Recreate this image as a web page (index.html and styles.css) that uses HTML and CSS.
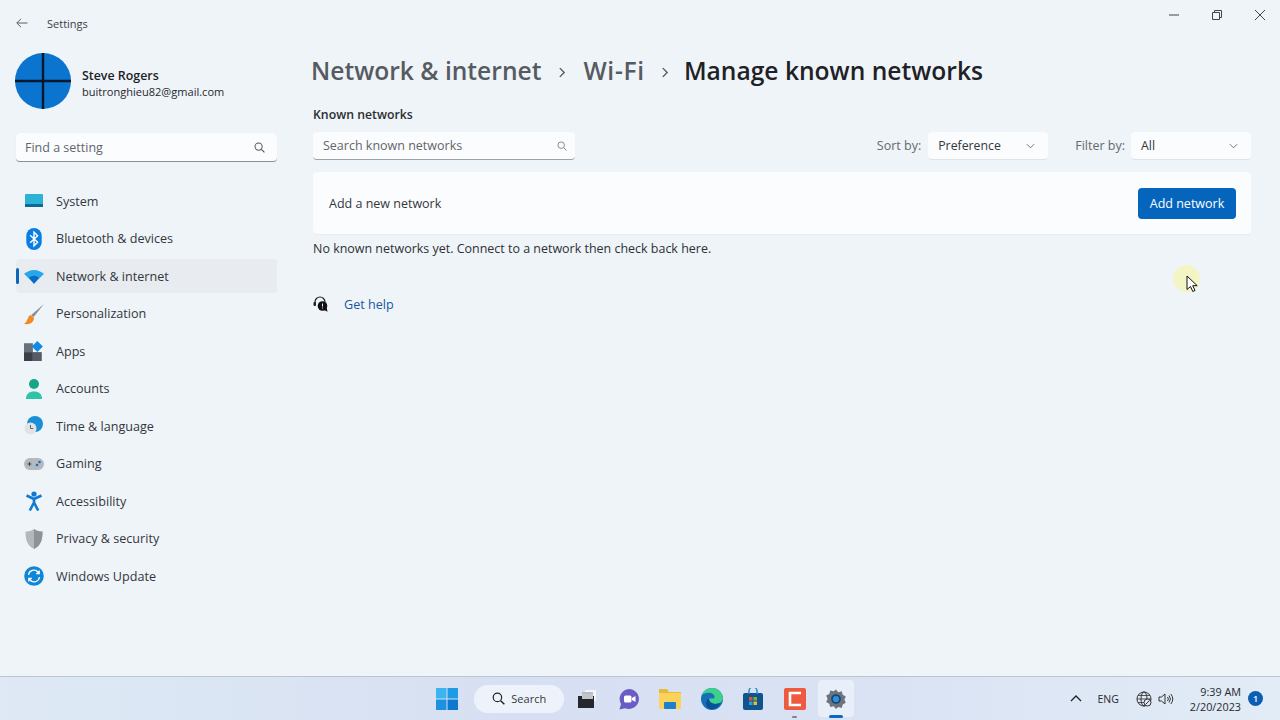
FILE: index.html
```html
<!DOCTYPE html>
<html lang="en">
<head>
<meta charset="utf-8">
<title>Settings</title>
<link rel="stylesheet" href="styles.css">
</head>
<body>
<div class="app">
  <header class="titlebar">
    <svg class="back" viewBox="0 0 12 10"><path d="M11.500 5H.8M5 .8.8 5 5 9.200" fill="none" stroke="#5a5f66" stroke-width="1"/></svg>
    <span class="apptitle">Settings</span>
    <div class="winbtns">
      <svg class="winbtn" viewBox="0 0 10 10"><path d="M0 5h10" stroke="#444" fill="none"/></svg>
      <svg class="winbtn" viewBox="0 0 10 10"><path d="M.5 2.500h7v7h-7zM2.500 2.500V.5h7v7h-2" stroke="#444" fill="none"/></svg>
      <svg class="winbtn" viewBox="0 0 10 10"><path d="M0 0l10 10M10 0 0 10" stroke="#444" fill="none"/></svg>
    </div>
  </header>
  <div class="main">
    <aside class="sidebar">
      <div class="profile">
        <svg class="avatar" viewBox="0 0 56 56"><circle cx="28" cy="28" r="28" fill="#0a74cf"/><path d="M28 0v56M0 28h56" stroke="#07182c" stroke-width="2.400"/></svg>
        <div class="who">
          <div class="name">Steve Rogers</div>
          <div class="mail">buitronghieu82@gmail.com</div>
        </div>
      </div>
      <div class="findbox">
        <span class="placeholder">Find a setting</span>
        <svg class="searchicon" viewBox="0 0 12 12"><circle cx="5" cy="5" r="3.900" fill="none" stroke="#555" stroke-width="1.100"/><path d="M8 8l3.400 3.400" stroke="#555" stroke-width="1.200"/></svg>
      </div>
      <nav class="nav">
        <div class="navrow">
          <svg class="navicon" viewBox="0 0 20 20"><rect x="1" y="3" width="18" height="13" rx="1" fill="#2bb3d6"/><rect x="1" y="13" width="18" height="3" fill="#0c6a9a"/></svg>
          <span>System</span>
        </div>
        <div class="navrow">
          <svg class="navicon big" viewBox="0 0 18 20"><rect x="2" y="0" width="14" height="20" rx="7" fill="#0a7de3"/><path d="M5.500 6.500 12.300 13 9 16.200V3.800L12.300 7 5.500 13.500" fill="none" stroke="#fff" stroke-width="1.300"/></svg>
          <span>Bluetooth &amp; devices</span>
        </div>
        <div class="navrow active">
          <svg class="navicon" viewBox="0 0 18 16"><path d="M0 6Q9-1 18 6L9 15z" fill="#27a7e8"/><path d="M4.500 9.500Q9 6 13.500 9.500L9 15z" fill="#0a68c9"/></svg>
          <span>Network &amp; internet</span>
        </div>
        <div class="navrow">
          <svg class="navicon big" viewBox="0 0 18 18"><path d="M18 0 6.500 10l2 2z" fill="#8a8f96"/><path d="M6 10C3 10.500 4 15.500 0 18c4 .5 8.500-.5 9-5.500z" fill="#f08a24"/></svg>
          <span>Personalization</span>
        </div>
        <div class="navrow">
          <svg class="navicon" viewBox="0 0 18 18"><rect x="0" y="2" width="8" height="8" fill="#68707a"/><rect x="0" y="10" width="8" height="8" fill="#3a4048"/><rect x="8" y="10" width="8" height="8" fill="#565c65"/><path d="M12 0l5 5-5 5-5-5z" fill="#1189e6"/></svg>
          <span>Apps</span>
        </div>
        <div class="navrow">
          <svg class="navicon" viewBox="0 0 18 20"><circle cx="9" cy="5" r="5" fill="#17a589"/><path d="M1 20c0-5 3-7.500 8-7.500s8 2.500 8 7.500z" fill="#2ec4a6"/></svg>
          <span>Accounts</span>
        </div>
        <div class="navrow">
          <svg class="navicon" viewBox="0 0 20 20"><circle cx="11" cy="8" r="8" fill="#1a8fd6"/><circle cx="6.500" cy="12.500" r="6" fill="#dfe3e8"/><path d="M6.500 9v3.500h2.800" fill="none" stroke="#555" stroke-width=".9"/></svg>
          <span>Time &amp; language</span>
        </div>
        <div class="navrow">
          <svg class="navicon" viewBox="0 0 20 14"><rect y="1" width="20" height="12" rx="6" fill="#b4b8bf"/><path d="M3.500 7h4M5.500 5v4" stroke="#444" stroke-width="1"/><circle cx="13" cy="8" r="1.300" fill="#1a6fc4"/><circle cx="15.500" cy="5" r="1.300" fill="#1a6fc4"/></svg>
          <span>Gaming</span>
        </div>
        <div class="navrow">
          <svg class="navicon" viewBox="0 0 18 20"><circle cx="9" cy="3" r="2.600" fill="#0f7ad1"/><path d="M1.500 4.500 9 8l7.500-3.500M9 8v3.500M9 11.500 4.800 19.500M9 11.500l4.200 8" fill="none" stroke="#0f7ad1" stroke-width="2.600"/></svg>
          <span>Accessibility</span>
        </div>
        <div class="navrow">
          <svg class="navicon" viewBox="0 0 18 20"><path d="M9 0c2.500 2 5.500 2.500 8.500 2.500 0 8-1.500 14-8.500 17.500C2 16.500.5 10.500.5 2.500 3.500 2.500 6.500 2 9 0z" fill="#b4b8bd"/><path d="M9 0c2.500 2 5.500 2.500 8.500 2.500 0 8-1.500 14-8.500 17.500z" fill="#8e9399"/></svg>
          <span>Privacy &amp; security</span>
        </div>
        <div class="navrow">
          <svg class="navicon" viewBox="0 0 20 20"><circle cx="10" cy="10" r="9.800" fill="#0f86d8"/><path d="M4.500 9a5.500 5.500 0 0 1 9.500-3l1.200 1.500M15.200 4.500v3h-3M15.500 11a5.500 5.500 0 0 1-9.500 3l-1.200-1.500M4.800 15.500v-3h3" fill="none" stroke="#fff" stroke-width="1.300"/></svg>
          <span>Windows Update</span>
        </div>
      </nav>
    </aside>
    <main class="content">
      <h1 class="crumbs">
        <span class="crumb">Network &amp; internet</span>
        <svg class="sep" viewBox="0 0 6 10"><path d="M1 1l4 4-4 4" fill="none" stroke="#555" stroke-width="1.200"/></svg>
        <span class="crumb wifi">Wi-Fi</span>
        <svg class="sep" viewBox="0 0 6 10"><path d="M1 1l4 4-4 4" fill="none" stroke="#555" stroke-width="1.200"/></svg>
        <span class="current">Manage known networks</span>
      </h1>
      <div class="sectionlabel">Known networks</div>
      <div class="toolbar">
        <div class="knownsearch">
          <span class="placeholder">Search known networks</span>
          <svg class="searchicon small" viewBox="0 0 12 12"><circle cx="5" cy="5" r="3.900" fill="none" stroke="#777" stroke-width="1"/><path d="M8 8l3.400 3.400" stroke="#777" stroke-width="1.100"/></svg>
        </div>
        <div class="filters">
          <span class="fieldlabel">Sort by:</span>
          <div class="select"><span>Preference</span><svg class="chev" viewBox="0 0 10 6"><path d="M1 1l4 4 4-4" fill="none" stroke="#666"/></svg></div>
          <span class="fieldlabel second">Filter by:</span>
          <div class="select"><span>All</span><svg class="chev" viewBox="0 0 10 6"><path d="M1 1l4 4 4-4" fill="none" stroke="#666"/></svg></div>
        </div>
      </div>
      <section class="card">
        <span>Add a new network</span>
        <button class="primary">Add network</button>
      </section>
      <p class="empty">No known networks yet. Connect to a network then check back here.</p>
      <div class="help">
        <svg class="helpicon" viewBox="0 0 16 16"><path d="M2 8V6a5 5 0 0 1 10 0" fill="none" stroke="#222" stroke-width="1.200"/><rect x="0.500" y="6" width="2.500" height="4" rx="1" fill="#222"/><circle cx="9.500" cy="10" r="4.800" fill="#111"/><path d="M10 13.500l4.500 2.300-.8-4z" fill="#111"/><path d="M9.500 7.500v3M9.500 11.500v1" stroke="#eff4f9" stroke-width="1"/></svg>
        <a class="helplink">Get help</a>
      </div>
    </main>
  </div>
  <footer class="taskbar">
    <div></div>
    <div class="tasks">
      <div class="task">
        <svg class="taskicon win" viewBox="0 0 22 22"><rect width="10.500" height="10.500" fill="#3cb4f0"/><rect x="11.500" width="10.500" height="10.500" fill="#1f9be6"/><rect y="11.500" width="10.500" height="10.500" fill="#1a92e0"/><rect x="11.500" y="11.500" width="10.500" height="10.500" fill="#0c78d0"/></svg>
      </div>
      <div class="taskpill">
        <svg class="pillicon" viewBox="0 0 12 12"><circle cx="5" cy="5" r="3.900" fill="none" stroke="#222" stroke-width="1.100"/><path d="M8 8l3.400 3.400" stroke="#222" stroke-width="1.300"/></svg>
        <span>Search</span>
      </div>
      <div class="task">
        <svg class="taskicon small" viewBox="0 0 18 18"><rect x="7" y="0" width="11" height="11" fill="#f4f5f7"/><rect x="4" y="2" width="11" height="10" fill="#b9bcc0"/><rect x="0" y="6" width="16" height="12" fill="#24272c"/><rect x="4" y="4" width="11" height="5" fill="#c3c5c8"/></svg>
      </div>
      <div class="task">
        <svg class="taskicon" viewBox="0 0 22 22"><path d="M11 1a10 10 0 1 1-4 19.200L1.500 21.500 3 16A10 10 0 0 1 11 1z" fill="#6b5cc4"/><rect x="6" y="7.500" width="7.500" height="7" rx="1.500" fill="#fff"/><path d="M14 10l3.500-2v6L14 12z" fill="#fff"/></svg>
      </div>
      <div class="task">
        <svg class="taskicon" viewBox="0 0 22 22"><path d="M0 1h8l2 3h12v17H0z" fill="#e9b93a"/><rect y="5" width="22" height="16" fill="#fbd35b"/><rect x="5" y="14" width="12" height="7" rx="1" fill="#1f7fc9"/></svg>
      </div>
      <div class="task">
        <svg class="taskicon" viewBox="0 0 22 22"><circle cx="11" cy="11" r="11" fill="#1570b8"/><path d="M22 11C22 5 17 0 11 0 6 0 2 3 .500 7.500 3 4.500 9 4 12 6c2 1.500 2 4 .500 4.500H8c0 5 6 7 12 4z" fill="#3dd08c"/><path d="M8 10.500c0 5 6 7 12 4-2 5-7 7.500-11 6.500C4 19 4 12 8 10.500z" fill="#0a4f9a"/></svg>
      </div>
      <div class="task">
        <svg class="taskicon" viewBox="0 0 22 22"><rect x="1" y="5" width="20" height="17" rx="2" fill="#10538f"/><path d="M7 6V3a4 4 0 0 1 8 0v3" fill="none" stroke="#2a8fc9" stroke-width="1.500"/><rect x="7" y="9" width="3.500" height="3.500" fill="#e5532d"/><rect x="11.500" y="9" width="3.500" height="3.500" fill="#6fb53a"/><rect x="7" y="13.500" width="3.500" height="3.500" fill="#2a9de0"/><rect x="11.500" y="13.500" width="3.500" height="3.500" fill="#f2b81f"/></svg>
      </div>
      <div class="task running">
        <svg class="taskicon" viewBox="0 0 22 22"><rect width="22" height="22" rx="2" fill="#ee5a3f"/><path d="M17 5H6v12h11" fill="none" stroke="#fff" stroke-width="2.600"/></svg>
      </div>
      <div class="task open">
        <svg class="taskicon" viewBox="0 0 24 24"><path d="M12 1.500l2.500 3 3.800-.900 1 3.800 3.400 1.800-1.500 3.600 1.500 3.300-3.400 1.900-1 3.700-3.800-.9L12 23l-2.500-3.100-3.800.900-1-3.700-3.400-1.900 1.500-3.300-1.500-3.600 3.400-1.800 1-3.800 3.800.9z" fill="#6c7480"/><circle cx="12" cy="12" r="5.300" fill="#17486f"/><circle cx="12" cy="12" r="3.400" fill="#2d8fe0"/></svg>
      </div>
    </div>
    <div class="tray">
      <svg class="chevup" viewBox="0 0 12 7"><path d="M1 6l5-5 5 5" fill="none" stroke="#222" stroke-width="1.300"/></svg>
      <span class="lang">ENG</span>
      <svg class="trayicon" viewBox="0 0 16 16"><circle cx="8" cy="8" r="7" fill="none" stroke="#333"/><ellipse cx="8" cy="8" rx="3" ry="7" fill="none" stroke="#333"/><path d="M1 8h14M2 4.500h12M2 11.500h12" stroke="#333" fill="none" stroke-width=".8"/><circle cx="11.500" cy="11.500" r="3.500" fill="#dfe8f4" stroke="#333"/><path d="M9.500 13.500l4-4" stroke="#333"/></svg>
      <svg class="trayicon sound" viewBox="0 0 16 16"><path d="M1 6h2.500L7 3v10L3.500 10H1z" fill="none" stroke="#333"/><path d="M9.500 6a3 3 0 0 1 0 4M11 4.500a5.500 5.500 0 0 1 0 7M12.800 3a8 8 0 0 1 0 10" fill="none" stroke="#333"/></svg>
      <div class="clock"><div>9:39 AM</div><div>2/20/2023</div></div>
      <span class="badge">1</span>
    </div>
  </footer>
  <div class="cursor">
    <svg class="pointer" viewBox="0 0 12 18"><path d="M1 1v13.500l3.500-3 2.300 5 2.200-1-2.300-4.800h4.500z" fill="#fff" stroke="#111" stroke-width="1"/></svg>
  </div>
</div>
</body>
</html>
```
FILE: styles.css
```css
* { box-sizing: border-box; }
html, body { margin: 0; height: 100%; }
body {
  font-family: "Open Sans", "Noto Sans", "Liberation Sans", sans-serif;
  font-size: 13px;
  color: #33373c;
  background: #eff4f9;
  overflow: hidden;
}
.app { width: 1280px; height: 720px; display: flex; flex-direction: column; position: relative; }
.titlebar { height: 46px; display: flex; align-items: center; padding-left: 16px; flex: none; }
.back { width: 12px; height: 10px; }
.apptitle { margin-left: 19px; font-size: 11px; color: #3c4046; }
.winbtns { margin-left: auto; display: flex; align-self: flex-start; margin-top: 10px; margin-right: 15px; gap: 33px; }
.winbtn { width: 10px; height: 10px; }
.main { flex: 1; display: flex; min-height: 0; }
.sidebar { width: 293px; flex: none; padding: 7px 16px 0 16px; }
.profile { display: flex; align-items: center; margin-left: -1px; height: 56px; }
.avatar { width: 56px; height: 56px; flex: none; }
.who { margin-left: 11px; padding-top: 4px; }
.name { font-size: 12.400px; font-weight: 600; color: #1c1f23; line-height: 17px; }
.mail { font-size: 11.050px; color: #26292d; line-height: 16px; }
.findbox {
  margin-top: 24px; height: 29px; background: #fbfcfe; border-radius: 4px;
  border-bottom: 1px solid #8e9297; box-shadow: 0 0 1px #d8dde3;
  display: flex; align-items: center; justify-content: space-between; padding: 0 12px 0 9px;
}
.placeholder { color: #62666b; font-size: 12.500px; }
.searchicon { width: 11px; height: 11px; }
.searchicon.small { width: 10px; height: 10px; }
.nav { margin-top: 22px; display: flex; flex-direction: column; gap: 3.500px; }
.navrow {
  height: 34px; display: flex; align-items: center; padding-left: 8px; position: relative;
  font-size: 12.600px; color: #33373c; border-radius: 4px;
}
.navrow span { margin-left: 12px; }
.navicon { width: 20px; height: 20px; flex: none; }
.navicon.big { width: 20px; height: 22px; margin: -1px 0; }
.navrow.active { background: #e8ecf0; }
.navrow.active::before {
  content: ""; position: absolute; left: 0; top: 9px; width: 3px; height: 16px;
  background: #0a68b8; border-radius: 2px;
}
.content { flex: 1; padding: 5px 29px 0 20px; min-width: 0; }
.crumbs { margin: 0 0 0 -2px; height: 40px; display: flex; align-items: center; font-size: 24.600px; font-weight: 600; line-height: 40px; }
.crumb { color: #565b61; }
.wifi { letter-spacing: .7px; }
.current { color: #1e2125; }
.sep { width: 8px; height: 11px; margin: 2px 17px 0 17px; flex: none; }
.wifi + .sep { margin: 2px 15px 0 16px; }
.sectionlabel { margin-top: 14px; font-size: 12.300px; font-weight: 600; color: #2a2d31; line-height: 20px; }
.toolbar { margin-top: 7px; display: flex; justify-content: space-between; align-items: center; }
.knownsearch {
  width: 262px; height: 28px; background: #fbfcfe; border-radius: 4px; border-bottom: 1px solid #9da1a6;
  display: flex; align-items: center; justify-content: space-between; padding: 0 8px 0 10px;
}
.filters { display: flex; align-items: center; }
.fieldlabel { color: #66696e; font-size: 12.500px; margin-right: 7px; margin-top: -2px; }
.fieldlabel.second { margin-left: 27px; margin-right: 6px; }
.select {
  height: 28px; width: 120px; background: #fbfcfe; border-radius: 4px; border-bottom: 1px solid #dfe3e7;
  display: flex; align-items: center; justify-content: space-between; padding: 0 13px 0 10px;
  font-size: 12.300px; color: #33373c;
}
.chev { width: 9px; height: 6px; }
.card {
  margin-top: 12px; height: 63px; background: #fbfcfe; border-radius: 4px; border-bottom: 1px solid #e7ebef;
  display: flex; align-items: center; justify-content: space-between; padding: 0 15px 0 16px;
  font-size: 12.500px; color: #33373c;
}
.primary {
  width: 98px; height: 31px; border: 0; border-radius: 4px; background: #0565bd; color: #fff;
  font: inherit; font-size: 12.500px;
}
.empty { margin: 4px 0 0; line-height: 20px; font-size: 12.470px; color: #2d3035; }
.help { margin-top: 35px; display: flex; align-items: center; height: 20px; }
.helpicon { width: 16px; height: 16px; flex: none; }
.helplink { margin-left: 15px; color: #17589f; font-size: 12.600px; }
.taskbar {
  height: 44px; flex: none; border-top: 1px solid #bfc5cf;
  background: linear-gradient(90deg, #dee9f5, #d6e0f2 40%, #dae3f4 70%, #e2ecf6);
  display: grid; grid-template-columns: 1fr auto 1fr; align-items: center;
}
.tasks { display: flex; align-items: center; height: 100%; }
.task { width: 41.500px; height: 37px; display: flex; align-items: center; justify-content: center; position: relative; }
.taskicon { width: 22px; height: 22px; }
.taskicon.small { width: 18px; height: 18px; }
.taskpill {
  width: 90px; height: 28px; border-radius: 14px; background: #eef3fb; margin: 0 2px 0 7px;
  display: flex; align-items: center; justify-content: center; gap: 6px; font-size: 11px; color: #33373c;
}
.pillicon { width: 13px; height: 13px; }
.task.running::after {
  content: ""; position: absolute; bottom: -1px; left: 18px; width: 5px; height: 2px; background: #7f848c; border-radius: 1px;
}
.task.open { background: #e9eff8; border-radius: 4px; width: 36px; margin-left: 3px; }
.task.open::after {
  content: ""; position: absolute; bottom: -1px; left: 11px; width: 14px; height: 3px; background: #0a68c0; border-radius: 2px;
}
.tray { display: flex; align-items: center; justify-content: flex-end; padding-right: 18px; }
.chevup { width: 12px; height: 7px; }
.lang { margin-left: 15px; font-size: 10.500px; color: #26292d; }
.trayicon { width: 16px; height: 16px; margin-left: 17px; }
.trayicon.sound { margin-left: 6px; }
.clock { margin-left: 16px; text-align: right; font-size: 10.800px; line-height: 15px; color: #26292d; }
.badge {
  width: 15px; height: 15px; margin-left: 7px; margin-right: -1px; border-radius: 50%; background: #0a5fb4; color: #fff;
  font-size: 9px; font-weight: 600; display: flex; align-items: center; justify-content: center;
}
.cursor {
  position: absolute; left: 1173px; top: 265px; width: 27px; height: 27px; border-radius: 50%;
  background: #f4f5c4;
}
.pointer { position: absolute; left: 13px; top: 10px; width: 12px; height: 18px; }
```
